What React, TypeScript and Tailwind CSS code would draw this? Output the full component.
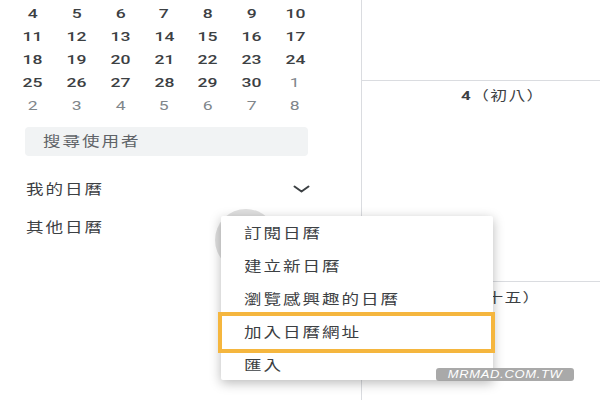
import React from "react";

const weeks = [
  ["4", "5", "6", "7", "8", "9", "10"],
  ["11", "12", "13", "14", "15", "16", "17"],
  ["18", "19", "20", "21", "22", "23", "24"],
  ["25", "26", "27", "28", "29", "30", "1"],
  ["2", "3", "4", "5", "6", "7", "8"],
];

const menuItems = ["訂閱日曆", "建立新日曆", "瀏覽感興趣的日曆", "加入日曆網址", "匯入"];

// the screenshot is horizontally stretched, text is widened to match
const wide = "inline-block origin-left scale-x-[1.3] text-[13.5px] tracking-[1.5px]";

export default function App() {
  return (
    <div className="relative w-[600px] h-[400px] overflow-hidden bg-white flex font-['Roboto','Noto_Sans_CJK_TC',sans-serif] text-[#3c4043]">
      {/* Sidebar */}
      <div className="w-[361px] shrink-0 flex flex-col">
        {/* Mini month */}
        <div className="pl-[11px] pt-[2px]">
          {weeks.map((week, wi) => (
            <div key={wi} className="grid grid-cols-7 w-[306px] h-[23px]">
              {week.map((d, di) => {
                const dim = wi === 4 || (wi === 3 && di === 6);
                return (
                  <div key={di} className="flex items-center justify-center">
                    <span
                      className={`inline-block scale-x-[1.35] text-[13px] ${
                        dim ? "text-[#80868b] font-normal" : "text-[#3c4043] font-medium"
                      }`}
                    >
                      {d}
                    </span>
                  </div>
                );
              })}
            </div>
          ))}
        </div>

        {/* Search */}
        <div className="ml-[25px] mt-[10px] w-[283px] h-[29px] rounded-[4px] bg-[#f1f3f4] flex items-center pl-[18px]">
          <span className={`${wide} text-[#5f6368]`}>搜尋使用者</span>
        </div>

        {/* Calendar lists */}
        <div className="mt-[14px] ml-[26px] w-[280px] h-[38px] flex items-center justify-between">
          <span className={wide}>我的日曆</span>
          <svg width="17" height="8" viewBox="0 0 17 8" className="mr-[-4px]">
            <path d="M1.5 1.5 L8.5 6.5 L15.5 1.5" fill="none" stroke="#3c4043" strokeWidth="2" strokeLinecap="round" strokeLinejoin="round" />
          </svg>
        </div>
        <div className="ml-[26px] h-[38px] flex items-center">
          <span className={wide}>其他日曆</span>
        </div>
      </div>

      {/* Main grid */}
      <div className="flex-1 flex flex-col border-l border-[#dadce0]">
        <div className="h-[81px] shrink-0 border-b border-[#dadce0]" />
        <div className="h-[201px] shrink-0 border-b border-[#dadce0] pl-[99px] pt-[2px]">
          <span className="inline-block origin-left scale-x-[1.3] text-[13px] tracking-[1px]">
            <span className="font-bold">4</span>（初八）
          </span>
        </div>
        <div className="pl-[84px] pt-[3px]">
          <span className="inline-block origin-left scale-x-[1.3] text-[13px] tracking-[1px]">
            <span className="font-bold">11</span>（十五）
          </span>
        </div>
      </div>

      {/* Ripple behind add button */}
      <div className="absolute left-[215px] top-[209px] w-[62px] h-[62px] rounded-full bg-[#e0e0e0]" />

      {/* Dropdown menu */}
      <div className="absolute left-[221px] top-[216px] w-[272px] h-[164px] bg-white rounded-[2px] shadow-[0_3px_12px_rgba(0,0,0,0.28)] pt-[1px]">
        {menuItems.map((item) => (
          <div key={item} className="h-[33px] flex items-center pl-[23px]">
            <span className={`${wide} text-[#3c4043]`}>{item}</span>
          </div>
        ))}
        <div className="absolute left-[-3px] top-[96px] w-[277px] h-[41px] border-[4px] border-[#f5b63e]" />
      </div>

      {/* Watermark */}
      <div className="absolute left-[436px] top-[368px] w-[138px] h-[13px] rounded-[3px] bg-[#a0a0a0]/90 flex items-center justify-center">
        <span className="inline-block scale-x-[1.3] text-[10px] leading-none italic tracking-[0.5px] text-white font-['Liberation_Sans',sans-serif]">MRMAD.COM.TW</span>
      </div>
    </div>
  );
}
